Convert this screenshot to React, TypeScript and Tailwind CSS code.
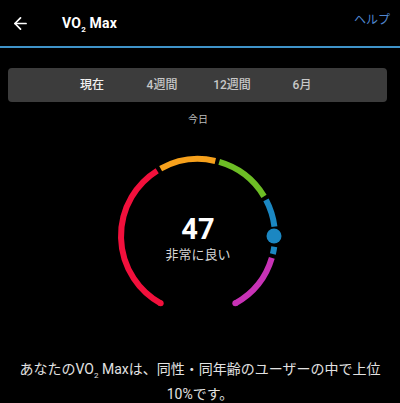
import { ArrowLeft } from 'lucide-react';

// Gauge geometry (angles in degrees, measured clockwise from 12 o'clock)
const CX = 100;
const CY = 100;
const R = 77;

const polar = (deg: number, r = R) => {
  const rad = ((deg - 90) * Math.PI) / 180;
  return { x: CX + r * Math.cos(rad), y: CY + r * Math.sin(rad) };
};

const arc = (from: number, to: number) => {
  const a = polar(from);
  const b = polar(to);
  const large = to - from > 180 ? 1 : 0;
  return `M ${a.x.toFixed(2)} ${a.y.toFixed(2)} A ${R} ${R} 0 ${large} 1 ${b.x.toFixed(2)} ${b.y.toFixed(2)}`;
};

const SEGMENTS = [
  { from: -151, to: -32, color: '#f2103c' },
  { from: -29, to: 13, color: '#f7a11c' },
  { from: 16, to: 59, color: '#6dbd25' },
  { from: 62, to: 83, color: '#1b87c2' },
  { from: 98, to: 103.5, color: '#1b87c2' },
  { from: 106.5, to: 151, color: '#c832b6' },
];

const TABS = ['現在', '4週間', '12週間', '6月'];

function Gauge() {
  const start = polar(-151);
  const end = polar(151);
  const dot = polar(90, 76);
  return (
    <svg width="200" height="200" viewBox="0 0 200 200" className="block">
      {SEGMENTS.map((s, i) => (
        <path key={i} d={arc(s.from, s.to)} fill="none" stroke={s.color} strokeWidth={6} />
      ))}
      <circle cx={start.x} cy={start.y} r={3} fill="#f2103c" />
      <circle cx={end.x} cy={end.y} r={3} fill="#c832b6" />
      <circle cx={dot.x} cy={dot.y} r={7.5} fill="#1b87c2" />
    </svg>
  );
}

export default function App() {
  return (
    <div
      className="w-[400px] h-[403px] bg-black text-white overflow-hidden"
      style={{ fontFamily: 'Roboto, "Noto Sans CJK JP", sans-serif' }}
    >
      {/* header */}
      <div className="h-[46px] flex items-center pl-[11px] pr-[10px]">
        <ArrowLeft size={19} strokeWidth={2.2} className="text-white" />
        <div className="ml-[32px] text-[14px] font-bold tracking-[0.2px]">
          VO<sub className="text-[8px] align-[-2px]">2</sub> Max
        </div>
        <div className="ml-auto text-[12px] text-[#4f86d0] mt-[-6px]">ヘルプ</div>
      </div>
      <div className="h-[2px] bg-[#3f93c9]" />

      {/* range tabs */}
      <div className="mt-[20px] ml-2 mr-[13px] h-[34px] rounded-[4px] bg-[#3c3c3c] flex items-center text-[12px] font-medium">
        <div className="ml-[49px] w-[70px] text-center text-[#f2f2f2]">{TABS[0]}</div>
        <div className="w-[70px] text-center text-[#c8c8c8]">{TABS[1]}</div>
        <div className="w-[70px] text-center text-[#c8c8c8]">{TABS[2]}</div>
        <div className="w-[70px] text-center text-[#c8c8c8]">{TABS[3]}</div>
      </div>

      <div className="mt-[11px] text-center text-[10px] leading-[14px] text-[#bdbdbd] ml-[-4px]">今日</div>

      {/* gauge */}
      <div className="relative mt-[9px] ml-[98px] w-[200px] h-[200px]">
        <Gauge />
        <div className="absolute inset-0 flex flex-col items-center justify-center pt-[5px]">
          <div className="text-[29px] font-bold leading-[32px]">47</div>
          <div className="text-[13px] leading-[18px] text-[#d6d6d6] mt-[1px]">非常に良い</div>
        </div>
      </div>

      {/* summary */}
      <div className="mt-[21px] px-3 text-center text-[14px] leading-[25px] text-[#e2e2e2]">
        あなたのVO<sub className="text-[8px] align-[-2px]">2</sub> Maxは、同性・同年齢のユーザーの中で上位
        <br />
        10%です。
      </div>
    </div>
  );
}
